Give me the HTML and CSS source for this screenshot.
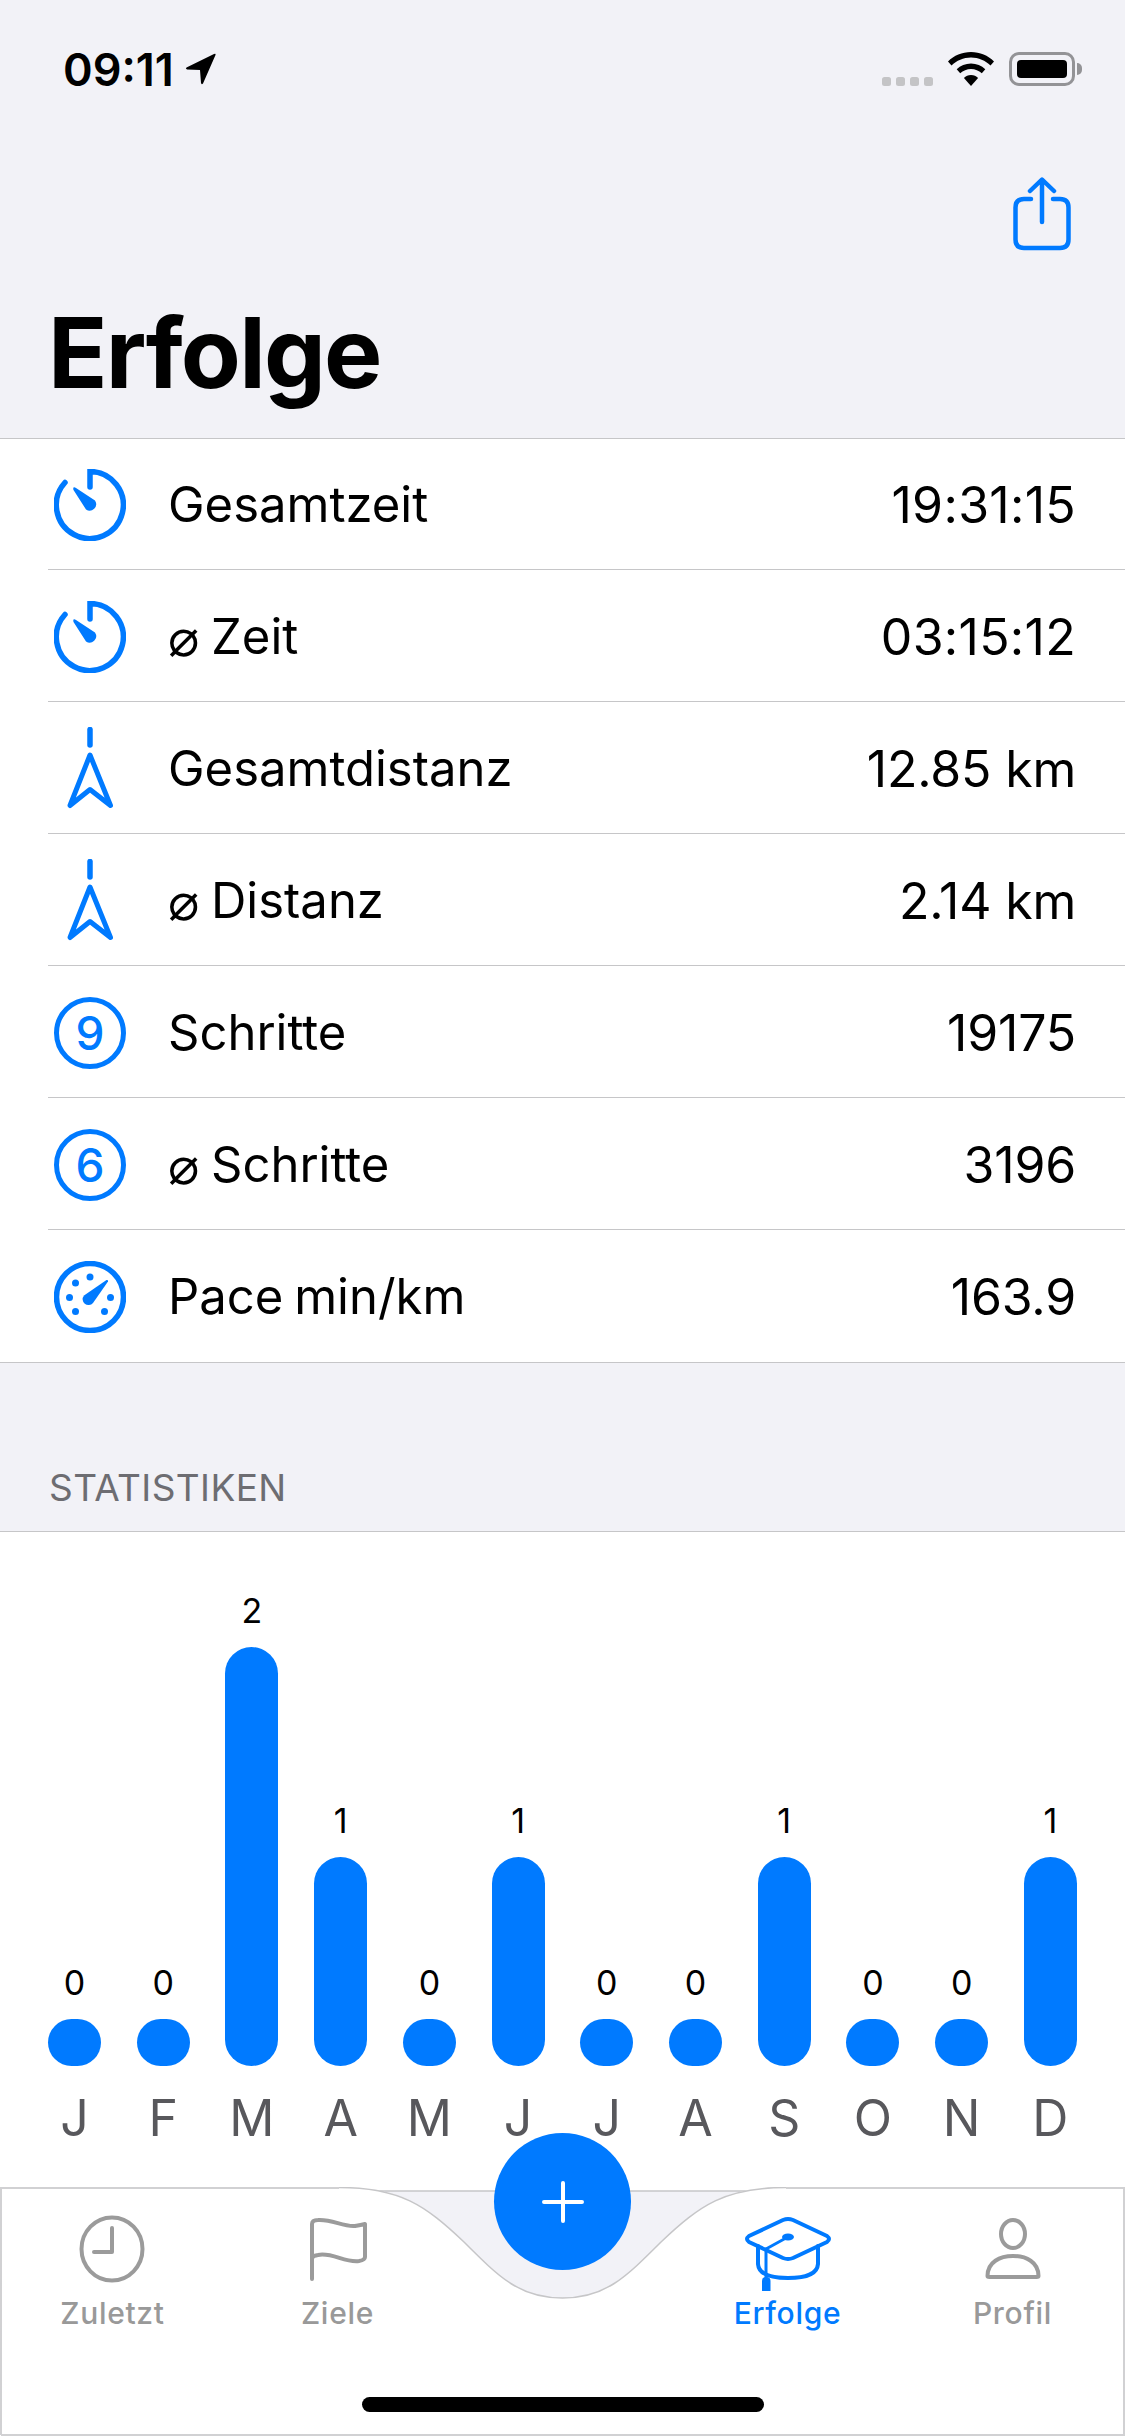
FILE: index.html
```html
<!DOCTYPE html>
<html lang="de">
<head>
  <meta charset="UTF-8">
  <title>Erfolge</title>
  <meta name="viewport" content="width=device-width, initial-scale=1.0">
  <link rel="stylesheet" href="styles.css">
</head>
<body>
  <header class="top">
    <div class="status-bar">
      <div class="clock">
        <span>09:11</span>
        <svg width="31" height="32" viewBox="0 0 31 32"><path d="M29 1 Q31 0 30.500 2 L18 30.500 Q16.500 32 16 30 L15 17 L2 16.500 Q0 15.500 1.500 14.500 Z" fill="#000"/></svg>
      </div>
      <div class="status-icons">
        <div class="signal"><i></i><i></i><i></i><i></i></div>
        <svg class="wifi" width="46" height="34" viewBox="0 0 46 34">
          <path d="M23 0 C32 0 40 3.5 46 9.5 L42.5 13.5 C37.5 8.5 30.5 5.5 23 5.5 C15.5 5.5 8.5 8.5 3.5 13.5 L0 9.500 C6 3.500 14 0 23 0Z" fill="#000"/>
          <path d="M23 11.500 C28.500 11.500 33.500 13.700 37.300 17.300 L33.800 21.200 C30.900 18.500 27.100 16.900 23 16.900 C18.900 16.900 15.100 18.500 12.200 21.200 L8.700 17.300 C12.500 13.700 17.500 11.500 23 11.500Z" fill="#000"/>
          <path d="M23 23 C25.800 23 28.300 24.100 30.100 25.900 L23 34 L15.900 25.900 C17.700 24.100 20.200 23 23 23Z" fill="#000"/>
        </svg>
        <div class="battery"><div class="battery-fill"></div></div>
      </div>
    </div>
    <div class="nav-row">
      <svg width="58" height="74" viewBox="0 0 58 74" fill="none" stroke="#007aff" stroke-width="4.500" stroke-linecap="round" stroke-linejoin="round">
        <path d="M18 22 H11 Q2.500 22 2.500 30.500 V62.500 Q2.500 71 11 71 H47 Q55.500 71 55.500 62.500 V30.500 Q55.500 22 47 22 H40"/>
        <path d="M29 45 V3 M17 14 L29 2.500 L41 14"/>
      </svg>
    </div>
    <h1 class="page-title">Erfolge</h1>
  </header>

  <ul class="stats">
    <li class="stat-row">
      <span class="stat-icon">
        <svg width="72" height="72" viewBox="0 0 72 72"><use href="#icon-timer"/></svg>
      </span>
      <span class="stat-label">Gesamtzeit</span>
      <span class="stat-value stat-time">19:31:15</span>
    </li>
    <li class="stat-row">
      <span class="stat-icon">
        <svg width="72" height="72" viewBox="0 0 72 72"><use href="#icon-timer"/></svg>
      </span>
      <span class="stat-label"><span class="avg">⌀</span>Zeit</span>
      <span class="stat-value stat-time">03:15:12</span>
    </li>
    <li class="stat-row">
      <span class="stat-icon">
        <svg width="72" height="84" viewBox="0 0 72 84"><use href="#icon-distance"/></svg>
      </span>
      <span class="stat-label">Gesamtdistanz</span>
      <span class="stat-value">12.85 km</span>
    </li>
    <li class="stat-row">
      <span class="stat-icon">
        <svg width="72" height="84" viewBox="0 0 72 84"><use href="#icon-distance"/></svg>
      </span>
      <span class="stat-label"><span class="avg">⌀</span>Distanz</span>
      <span class="stat-value">2.14 km</span>
    </li>
    <li class="stat-row">
      <span class="stat-icon"><span class="digit-badge">9</span></span>
      <span class="stat-label">Schritte</span>
      <span class="stat-value">19175</span>
    </li>
    <li class="stat-row">
      <span class="stat-icon"><span class="digit-badge">6</span></span>
      <span class="stat-label"><span class="avg">⌀</span>Schritte</span>
      <span class="stat-value">3196</span>
    </li>
    <li class="stat-row">
      <span class="stat-icon">
        <svg width="72" height="72" viewBox="0 0 72 72">
          <circle cx="36" cy="36" r="33.500" fill="none" stroke="#007aff" stroke-width="5.500"/>
          <g fill="#007aff">
            <circle cx="36" cy="16" r="3.500"/>
            <circle cx="21.500" cy="22" r="3.500"/>
            <circle cx="15.500" cy="36.500" r="3.500"/>
            <circle cx="56.500" cy="36.500" r="3.500"/>
            <circle cx="21.500" cy="50.500" r="3.500"/>
            <circle cx="50.500" cy="50.500" r="3.500"/>
            <path d="M52.500 19 Q54.500 18.500 54 20.500 L39 42 A5.500 5.500 0 0 1 30 34.500 Z"/>
          </g>
        </svg>
      </span>
      <span class="stat-label">Pace min/km</span>
      <span class="stat-value">163.9</span>
    </li>
  </ul>

  <h2 class="section-title">STATISTIKEN</h2>

  <section class="chart">
    <div class="month"><span class="count">0</span><div class="bar bar-0"></div><span class="letter">J</span></div>
    <div class="month"><span class="count">0</span><div class="bar bar-0"></div><span class="letter">F</span></div>
    <div class="month"><span class="count">2</span><div class="bar bar-2"></div><span class="letter">M</span></div>
    <div class="month"><span class="count">1</span><div class="bar bar-1"></div><span class="letter">A</span></div>
    <div class="month"><span class="count">0</span><div class="bar bar-0"></div><span class="letter">M</span></div>
    <div class="month"><span class="count">1</span><div class="bar bar-1"></div><span class="letter">J</span></div>
    <div class="month"><span class="count">0</span><div class="bar bar-0"></div><span class="letter">J</span></div>
    <div class="month"><span class="count">0</span><div class="bar bar-0"></div><span class="letter">A</span></div>
    <div class="month"><span class="count">1</span><div class="bar bar-1"></div><span class="letter">S</span></div>
    <div class="month"><span class="count">0</span><div class="bar bar-0"></div><span class="letter">O</span></div>
    <div class="month"><span class="count">0</span><div class="bar bar-0"></div><span class="letter">N</span></div>
    <div class="month"><span class="count">1</span><div class="bar bar-1"></div><span class="letter">D</span></div>
  </section>

  <nav class="tabbar">
    <svg class="tabbar-bg" width="1125" height="249" viewBox="0 0 1125 249">
      <rect x="376" y="4" width="373" height="110" fill="#f2f2f7"/>
      <path d="M376 4 H749" stroke="#c6c6c8" stroke-width="1.500" fill="none"/>
      <path d="M0 0 H339 C400 0 425 18 464 55 C500 91 520 111 562.500 111 C605 111 625 91 661 55 C700 18 725 0 786 0 H1125 V249 H0 Z" fill="#fff"/>
      <path d="M1 248 V1 H339 M786 1 H1124 V248 H1" fill="none" stroke="#d1d1d3" stroke-width="2"/>
      <path d="M339 .5 C400 .5 425 18 464 55 C500 91 520 111 562.500 111 C605 111 625 91 661 55 C700 18 725 .5 786 .5" fill="none" stroke="#c6c6c8" stroke-width="1.500"/>
    </svg>
    <a class="tab">
      <svg class="tab-icon" width="78" height="80" viewBox="0 0 78 80" fill="none" stroke="#9b9b9b" stroke-width="4" stroke-linecap="round" stroke-linejoin="round">
        <ellipse cx="38" cy="38" rx="30.500" ry="31.500"/>
        <path d="M38 17 V41 H20"/>
      </svg>
      <span class="tab-label">Zuletzt</span>
    </a>
    <a class="tab">
      <svg class="tab-icon" width="78" height="80" viewBox="0 0 78 80" fill="none" stroke="#9b9b9b" stroke-width="4" stroke-linecap="round" stroke-linejoin="round">
        <path d="M13 68 V13 Q13 9 19 9 C33 8 44 16 56 15 Q62 14 66 13 V46 Q66 49 60 50 C46 52 33 41 19 44 Q13 45 13 48"/>
      </svg>
      <span class="tab-label">Ziele</span>
    </a>
    <div class="tab tab-spacer"></div>
    <a class="tab tab-active">
      <svg class="tab-icon" width="90" height="80" viewBox="0 0 90 80" fill="none" stroke="#007aff" stroke-width="4" stroke-linecap="round" stroke-linejoin="round">
        <path d="M40 9 Q45 7 50 9 L84 25 Q88 28 84 31 L50 47 Q45 49 40 47 L6 31 Q2 28 6 25 Z"/>
        <path d="M15 35 V53 Q16 67 45 67 Q74 67 75 53 V35"/>
        <path d="M23 38 V70" stroke-width="3"/>
        <path d="M23 38 L43 27" stroke-width="3"/>
        <ellipse cx="45" cy="26" rx="6" ry="3.500" fill="#007aff" stroke="none"/>
        <rect x="19" y="66" width="8.500" height="17" rx="4" fill="#007aff" stroke="none"/>
      </svg>
      <span class="tab-label">Erfolge</span>
    </a>
    <a class="tab">
      <svg class="tab-icon" width="78" height="80" viewBox="0 0 78 80" fill="none" stroke="#9b9b9b" stroke-width="4" stroke-linecap="round" stroke-linejoin="round">
        <ellipse cx="39" cy="23" rx="12" ry="14"/>
        <path d="M13.500 65 C13.500 51 26 45 39 45 C52 45 64.500 51 64.500 65 Q64.500 66 62.500 66 H15.500 Q13.500 66 13.500 65 Z"/>
      </svg>
      <span class="tab-label">Profil</span>
    </a>
    <button class="add-btn">
      <svg width="42" height="42" viewBox="0 0 42 42" stroke="#fff" stroke-width="4" stroke-linecap="round"><path d="M21 2 V40 M2 21 H40"/></svg>
    </button>
    <div class="home-indicator"></div>
  </nav>

  <!-- shared row icons -->
  <svg class="defs" width="0" height="0">
    <defs>
      <g id="icon-timer">
        <path d="M36 18 V2.500 A33.500 33.500 0 1 1 11 13.500" fill="none" stroke="#007aff" stroke-width="5.500" stroke-linecap="round"/>
        <path d="M19.500 18.500 Q20.500 18 22 19 L41 31.500 A6.500 6.500 0 0 1 32 40.500 L19.500 21 Q19 19.500 19.500 18.500 Z" fill="#007aff"/>
      </g>
      <g id="icon-distance" fill="none" stroke="#007aff" stroke-linecap="round" stroke-linejoin="round">
        <path d="M36 2.500 V18" stroke-width="5.500"/>
        <path d="M36 28 L56.500 78.500 L36 62.500 L16 78.500 Z" stroke-width="5"/>
      </g>
    </defs>
  </svg>
</body>
</html>
```

FILE: styles.css
```css
:root {
  --bg: #f2f2f7;
  --panel: #fff;
  --primary: #007aff;
  --text: #000;
  --text-secondary: #6d6d72;
  --border: #c6c6c8;
  --tab-grey: #999;
}
* {
  box-sizing: border-box;
}
html, body {
  margin: 0;
  padding: 0;
}
body {
  position: relative;
  width: 1125px;
  height: 2436px;
  overflow: hidden;
  background: var(--bg);
  color: var(--text);
  font-family: 'Inter', 'Liberation Sans', sans-serif;
}

/* Header */
.top {
  height: 439px;
  border-bottom: 1px solid var(--border);
}
.status-bar {
  height: 138px;
  padding: 0 43px 0 63px;
  display: flex;
  justify-content: space-between;
  align-items: center;
}
.clock {
  display: flex;
  align-items: center;
  gap: 11px;
  font-size: 45px;
  font-weight: 600;
}
.status-icons {
  display: flex;
  align-items: flex-end;
  gap: 15px;
}
.signal {
  display: flex;
  gap: 5px;
}
.signal i {
  width: 9px;
  height: 9px;
  border-radius: 2.5px;
  background: #c4c4c6;
}
.battery {
  position: relative;
  width: 66px;
  height: 34px;
  padding: 5px;
  border: 3px solid #939396;
  border-radius: 10px;
  margin-right: 7px;
}
.battery::after {
  content: "";
  position: absolute;
  right: -10px;
  top: 8px;
  width: 5px;
  height: 12px;
  border-radius: 0 6px 6px 0;
  background: #939396;
}
.battery-fill {
  height: 100%;
  border-radius: 4px;
  background: #000;
}
.nav-row {
  display: flex;
  justify-content: flex-end;
  padding: 39px 54px 0 0;
}
.nav-row svg {
  display: block;
}
.page-title {
  margin: 43px 0 0 0;
  padding-left: 48px;
  font-size: 98px;
  line-height: 118px;
  font-weight: 700;
  letter-spacing: -1.8px;
}

/* Stat rows */
.stats {
  list-style: none;
  margin: 0;
  padding: 0;
  background: var(--panel);
  border-bottom: 1px solid var(--border);
}
.stat-row {
  position: relative;
  height: 132px;
  padding: 0 49px 0 54px;
  display: flex;
  align-items: center;
}
.stat-row:last-child {
  height: 131px;
}
.stat-row + .stat-row::before {
  content: "";
  position: absolute;
  left: 48px;
  right: 0;
  top: -2px;
  height: 1px;
  background: var(--border);
}
.stat-icon {
  width: 72px;
  margin-right: 42px;
  display: flex;
  justify-content: center;
  align-items: center;
}
.stat-icon svg {
  display: block;
}
.digit-badge {
  width: 72px;
  height: 72px;
  border: 5.500px solid var(--primary);
  border-radius: 50%;
  display: flex;
  justify-content: center;
  align-items: center;
  color: var(--primary);
  font-size: 46px;
  font-weight: 500;
}
.stat-label {
  flex: 1;
  font-size: 49px;
  line-height: 60px;
  word-spacing: -3px;
}
.stat-value {
  font-size: 50px;
  letter-spacing: -0.2px;
}
.stat-time {
  letter-spacing: 0.3px;
}
.avg {
  display: inline-block;
  width: 43px;
  font-family: 'DejaVu Sans', sans-serif;
  font-size: 52px;
  line-height: 50px;
  vertical-align: -2px;
}

/* Chart */
.section-title {
  height: 169px;
  margin: 0;
  padding: 100px 0 0 49px;
  font-size: 37px;
  line-height: 50px;
  font-weight: 400;
  color: var(--text-secondary);
  letter-spacing: 0.4px;
  border-bottom: 1px solid var(--border);
}
.chart {
  height: 700px;
  padding: 0 48px 144px;
  background: var(--panel);
  display: flex;
  justify-content: space-between;
  align-items: flex-end;
}
.month {
  width: 53px;
  display: flex;
  flex-direction: column;
  align-items: center;
}
.count {
  font-size: 34px;
  line-height: 40px;
  margin-bottom: 16px;
}
.bar {
  width: 100%;
  background: var(--primary);
  border-radius: 26.5px;
}
.bar-0 {
  height: 47px;
}
.bar-1 {
  height: 209px;
}
.bar-2 {
  height: 419px;
}
.letter {
  height: 70px;
  margin-top: 22px;
  margin-bottom: -70px;
  font-size: 50px;
  line-height: 60px;
  color: #58585c;
}

/* Tab bar */
.tabbar {
  position: absolute;
  left: 0;
  right: 0;
  bottom: 0;
  height: 249px;
  display: flex;
}
.tabbar-bg {
  position: absolute;
  left: 0;
  top: 0;
}
.tab {
  position: relative;
  flex: 1;
  padding-top: 24px;
  display: flex;
  flex-direction: column;
  align-items: center;
}
.tab-icon {
  display: block;
}
.tab-label {
  margin-top: 4px;
  font-size: 30px;
  line-height: 36px;
  font-weight: 500;
  letter-spacing: 0.7px;
  color: var(--tab-grey);
}
.tab-active .tab-label {
  color: var(--primary);
}
.add-btn {
  position: absolute;
  left: 494px;
  top: -54px;
  width: 137px;
  height: 137px;
  border: none;
  border-radius: 50%;
  padding: 0;
  background: var(--primary);
  display: flex;
  justify-content: center;
  align-items: center;
}
.home-indicator {
  position: absolute;
  left: 362px;
  bottom: 24px;
  width: 402px;
  height: 15px;
  border-radius: 8px;
  background: #000;
}
.defs {
  position: absolute;
}
```
